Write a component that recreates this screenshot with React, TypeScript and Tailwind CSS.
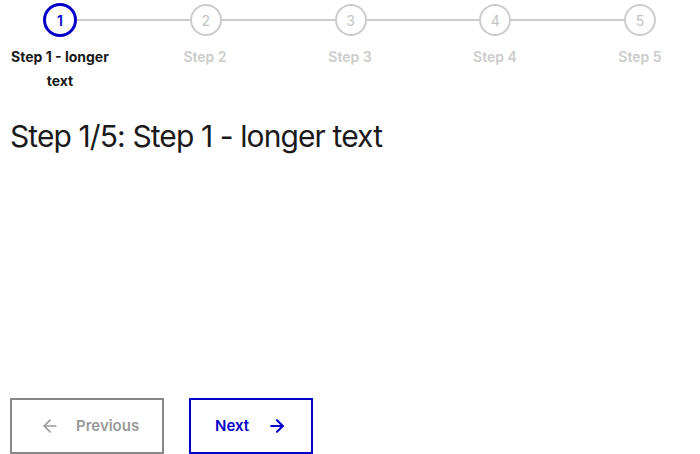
import { ArrowLeft, ArrowRight } from 'lucide-react';

const steps = ['Step 1 - longer text', 'Step 2', 'Step 3', 'Step 4', 'Step 5'];

function StepCircle({ n, active }: { n: number; active: boolean }) {
  if (active) {
    return (
      <div className="flex h-[34px] w-[34px] shrink-0 items-center justify-center rounded-full border-[3px] border-[#0000c8] text-[14px] font-semibold text-[#0000c8]">
        {n}
      </div>
    );
  }
  return (
    <div className="flex h-[32px] w-[32px] shrink-0 items-center justify-center rounded-full border-2 border-[#cccccc] text-[14px] text-[#c4c4c4]">
      {n}
    </div>
  );
}

export default function App() {
  const current = 0;

  return (
    <div className="flex h-[454px] w-[700px] flex-col bg-white font-['Inter',sans-serif] text-[#1a1a1a]">
      {/* stepper */}
      <div className="flex h-10 items-center pl-[43px] pr-[44px]">
        {steps.map((_, i) => (
          <div key={i} className={i === 0 ? 'flex items-center' : 'flex flex-1 items-center'}>
            {i > 0 && <div className="h-[2px] flex-1 bg-[#cccccc]" />}
            <StepCircle n={i + 1} active={i === current} />
          </div>
        ))}
      </div>
      <div className="mt-[5px] grid grid-cols-5 gap-[25px]">
        {steps.map((label, i) => (
          <div
            key={label}
            className={
              i === current
                ? 'px-2 text-center text-[14px] font-bold leading-6 text-[#1a1a1a]'
                : 'px-2 text-center text-[14px] font-semibold leading-6 text-[#cccccc]'
            }
          >
            {label}
          </div>
        ))}
      </div>

      <h1 className="mt-[23px] pl-[10px] text-[30px] font-normal leading-10 tracking-[-0.9px] text-[#1a1a1a]">
        Step 1/5: Step 1 - longer text
      </h1>

      <div className="flex-1" />

      <div className="flex gap-[25px] pl-[10px]">
        <button className="flex h-[56px] w-[154px] items-center gap-4 border-2 border-[#888888] pl-[28px] text-[15px] font-semibold text-[#999999]">
          <ArrowLeft size={20} strokeWidth={2} />
          Previous
        </button>
        <button className="flex h-[56px] w-[124px] items-center gap-[18px] border-2 border-[#0000c8] pl-6 text-[15px] font-semibold text-[#0000c8]">
          Next
          <ArrowRight size={20} strokeWidth={2.5} />
        </button>
      </div>
    </div>
  );
}
